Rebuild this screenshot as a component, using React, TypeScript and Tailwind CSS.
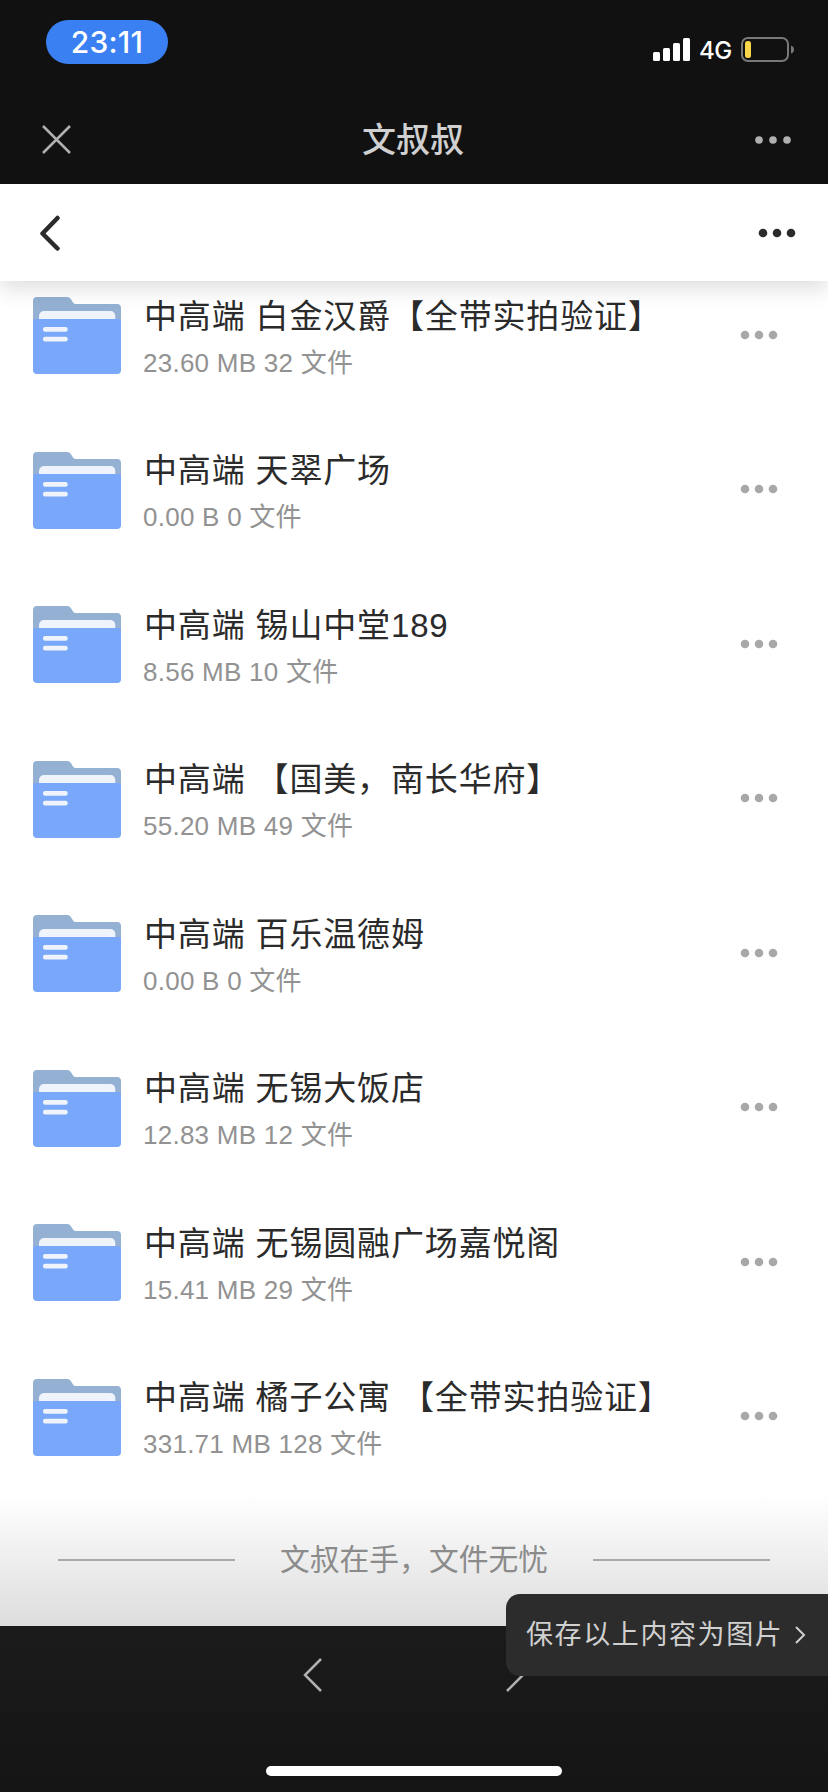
type Folder = {
  name: string;
  size: string;
  count: number;
};

const folders: Folder[] = [
  { name: '中高端 白金汉爵【全带实拍验证】', size: '23.60 MB', count: 32 },
  { name: '中高端 天翠广场', size: '0.00 B', count: 0 },
  { name: '中高端 锡山中堂189', size: '8.56 MB', count: 10 },
  { name: '中高端 【国美，南长华府】', size: '55.20 MB', count: 49 },
  { name: '中高端 百乐温德姆', size: '0.00 B', count: 0 },
  { name: '中高端 无锡大饭店', size: '12.83 MB', count: 12 },
  { name: '中高端 无锡圆融广场嘉悦阁', size: '15.41 MB', count: 29 },
  { name: '中高端 橘子公寓 【全带实拍验证】', size: '331.71 MB', count: 128 },
];

function Dots({ className, r = 4.3 }: { className: string; r?: number }) {
  return (
    <svg width="38" height="10" viewBox="0 0 38 10" fill="currentColor" className={className}>
      <circle cx="5" cy="5" r={r} />
      <circle cx="19" cy="5" r={r} />
      <circle cx="33" cy="5" r={r} />
    </svg>
  );
}

function FolderIcon() {
  return (
    <svg width="88" height="77" viewBox="0 0 88 77" className="mt-[1.5px] shrink-0">
      <path d="M4 0H34.500Q37 0 38.500 3L40 5.500Q41 7 43 7H84Q88 7 88 11V40H0V4Q0 0 4 0Z" fill="#94b1d3" />
      <path d="M6 26V19.500Q6 14 11.500 14H77Q82.300 14 82.300 19.500V26Z" fill="#eff3fb" />
      <path d="M3 22H85Q88 22 88 25V73Q88 77 84 77H4Q0 77 0 73V25Q0 22 3 22Z" fill="#79a7f9" />
      <rect x="10" y="30" width="24.700" height="4.700" rx="2" fill="#eff3fb" />
      <rect x="10" y="39.800" width="24.700" height="4.700" rx="2" fill="#eff3fb" />
    </svg>
  );
}

function StatusBar() {
  return (
    <div className="flex h-[96px] items-start justify-between pl-[46px] pr-[34px] text-white">
      <div className="mt-5 flex h-11 w-[122px] items-center justify-center rounded-[22px] bg-[#3a80f2] font-['Inter',sans-serif] text-[30px] font-medium tracking-[0.2px]">
        23:11
      </div>
      <div className="mt-[37px] flex h-[25px] items-center">
        <svg width="37" height="23" viewBox="0 0 37 23" fill="currentColor">
          <rect x="0" y="14" width="7" height="9" rx="1.500" />
          <rect x="10" y="10" width="7" height="13" rx="1.500" />
          <rect x="20" y="5" width="7" height="18" rx="1.500" />
          <rect x="30" y="0" width="7" height="23" rx="1.500" />
        </svg>
        <span className="ml-[9px] mt-0.5 w-[33px] whitespace-nowrap font-['Inter',sans-serif] text-[24px] font-medium leading-none tracking-[-0.5px]">
          4G
        </span>
        <svg width="53" height="25" viewBox="0 0 53 25" className="ml-[9px]">
          <rect x="1" y="1" width="46" height="23" rx="6" fill="none" stroke="#77787a" strokeWidth="2" />
          <rect x="4" y="4" width="6" height="17" rx="2.500" fill="#f9d749" />
          <path d="M50 8.500Q53 9.500 53 12.500T50 16.500Z" fill="#77787a" />
        </svg>
      </div>
    </div>
  );
}

function TitleBar() {
  return (
    <div className="flex h-[88px] items-center justify-between pl-[42px] pr-[36px]">
      <svg width="30" height="30" viewBox="0 0 30 30" fill="none" stroke="#b0b0b0" strokeWidth="2.500">
        <path d="M1 1L28 28M28 1L1 28" />
      </svg>
      <h1 className="text-[34px] font-medium leading-none text-[#d0d0d0]">文叔叔</h1>
      <Dots className="text-[#b0b0b0]" r={3.8} />
    </div>
  );
}

function FolderRow({ folder }: { folder: Folder }) {
  return (
    <li className="flex h-[154.5px] items-center pl-[33px] pr-[50px]">
      <FolderIcon />
      <div className="ml-[22px] flex-1 whitespace-nowrap pt-[8.5px]">
        <p className="pl-px text-[33px] leading-[47px] tracking-[0.85px] text-[#2b2b2b]">{folder.name}</p>
        <p className="text-[26px] leading-[46px] tracking-[0.25px] text-[#929292]">
          {folder.size} {folder.count} 文件
        </p>
      </div>
      <Dots className="text-[#a8a8a8]" />
    </li>
  );
}

export default function App() {
  return (
    <div className="relative flex h-[1792px] w-[828px] flex-col overflow-hidden bg-white font-['Liberation_Sans','Noto_Sans_CJK_SC',sans-serif]">
      <header className="relative z-20 bg-[#111111]">
        <StatusBar />
        <TitleBar />
      </header>

      <nav className="relative z-10 flex h-[97px] shrink-0 items-center justify-between bg-white pl-10 pr-8 shadow-[0_8px_20px_rgba(0,0,0,0.13)]">
        <svg width="22" height="36" viewBox="0 0 22 36" fill="none" stroke="#2b2b2b" strokeWidth="4.500" strokeLinecap="round" strokeLinejoin="round">
          <path d="M17.500 3L2.500 18.500L17.500 33.500" />
        </svg>
        <Dots className="text-[#2b2b2b]" />
      </nav>

      {/* list is scrolled a little under the nav */}
      <main className="-mt-[23.500px] h-[1368.500px] shrink-0">
        <ul>
          {folders.map((folder) => (
            <FolderRow key={folder.name} folder={folder} />
          ))}
        </ul>
        <footer className="flex h-[132.500px] items-center justify-between bg-gradient-to-b from-white to-[#dddddd] px-[58px]">
          <span className="h-0.5 w-[177px] bg-[#aaaaaa]" />
          <span className="whitespace-nowrap text-[29.800px] leading-none text-[#8b8b8b]">文叔在手，文件无忧</span>
          <span className="h-0.5 w-[177px] bg-[#aaaaaa]" />
        </footer>
      </main>

      <div className="relative flex flex-1 flex-col items-center justify-between bg-gradient-to-b from-[#1b1b1b] to-[#151515] pb-4 pt-8">
        <div className="flex w-[222px] justify-between">
          <svg width="20" height="34" viewBox="0 0 20 34" fill="none" stroke="#b0b0b0" strokeWidth="2.500">
            <path d="M18 1L2 17L18 33" />
          </svg>
          <svg width="20" height="34" viewBox="0 0 20 34" fill="none" stroke="#b0b0b0" strokeWidth="2.500">
            <path d="M2 1L18 17L2 33" />
          </svg>
        </div>
        <div className="h-2.5 w-[296px] rounded-full bg-white" />
      </div>

      <button className="absolute bottom-[116px] right-0 z-20 flex h-[82px] w-[322px] items-center rounded-l-[14px] bg-[#2c2c2c] pl-5 text-[#d0d0d0]">
        <span className="whitespace-nowrap text-[27px] tracking-[1.600px]">保存以上内容为图片</span>
        <svg width="12" height="18" viewBox="0 0 12 18" fill="none" stroke="currentColor" strokeWidth="2" className="ml-[11px]">
          <path d="M2 1L10 9L2 17" />
        </svg>
      </button>
    </div>
  );
}
